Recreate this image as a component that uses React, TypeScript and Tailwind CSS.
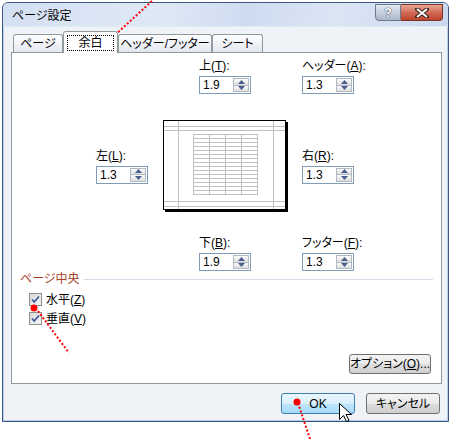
import React from 'react';

// ページ設定 dialog (Vista basic look)

type Lbl = { pre: string; u: string; post: string };

const Spinner = () => (
  <div className="flex flex-col w-[16px] h-[14px] mr-[1px]">
    <div className="flex-1 flex items-center justify-center border border-[#b4bac4] bg-gradient-to-b from-[#fbfbfb] to-[#dedede]">
      <svg width="7" height="4" viewBox="0 0 7 4">
        <path d="M3.5 0 L7 4 L0 4 Z" fill="#4a5e8e" />
      </svg>
    </div>
    <div className="flex-1 flex items-center justify-center border border-t-0 border-[#b4bac4] bg-gradient-to-b from-[#fbfbfb] to-[#dedede]">
      <svg width="7" height="4" viewBox="0 0 7 4">
        <path d="M0 0 L7 0 L3.5 4 Z" fill="#4a5e8e" />
      </svg>
    </div>
  </div>
);

const Field = ({ label, value }: { label: Lbl; value: string }) => (
  <div className="flex flex-col w-[52px]">
    <div className="text-[12px] leading-[14px] whitespace-nowrap">
      {label.pre}
      <u>{label.u}</u>
      {label.post}
    </div>
    <div className="mt-[3px] h-[18px] w-[52px] border border-[#7f9db9] bg-white flex items-center justify-between pl-[3px]">
      <span className="text-[12px] leading-[14px]">{value}</span>
      <Spinner />
    </div>
  </div>
);

const Preview = () => {
  const rows = Array.from({ length: 16 }, (_, i) => 14 + i * 4);
  const cols = [30, 46, 62, 78, 94];
  return (
    <svg width="125" height="92" viewBox="0 0 125 92" className="block">
      <rect x="2" y="2" width="123" height="90" fill="#000" />
      <rect x="0.5" y="0.5" width="122" height="89" fill="#fff" stroke="#000" />
      <g stroke="#c0c0c0" strokeWidth="1">
        {[6, 10, 81, 86].map(y => (
          <line key={'h' + y} x1="1" x2="122" y1={y + 0.5} y2={y + 0.5} />
        ))}
        {[15, 110].map(x => (
          <line key={'v' + x} x1={x + 0.5} x2={x + 0.5} y1="1" y2="89" />
        ))}
        {rows.map(y => (
          <line key={'r' + y} x1="30" x2="95" y1={y + 0.5} y2={y + 0.5} />
        ))}
        {cols.map(x => (
          <line key={'c' + x} x1={x + 0.5} x2={x + 0.5} y1="14" y2="75" />
        ))}
      </g>
    </svg>
  );
};

const Check = ({ label }: { label: Lbl }) => (
  <div className="h-[19px] flex items-center ml-[17px]">
    <svg width="13" height="13" viewBox="0 0 13 13">
      <defs>
        <linearGradient id="cbg" x1="0" y1="0" x2="1" y2="1">
          <stop offset="0" stopColor="#d6d6d6" />
          <stop offset="1" stopColor="#f7f7f7" />
        </linearGradient>
      </defs>
      <rect x="0.5" y="0.5" width="12" height="12" fill="url(#cbg)" stroke="#8e8f8f" />
      <path d="M3 6.5 L5.2 9 L10 3.5" fill="none" stroke="#3d5a9a" strokeWidth="1.8" />
    </svg>
    <span className="ml-[4px] text-[12px] leading-[14px] whitespace-nowrap">
      {label.pre}
      <u>{label.u}</u>
      {label.post}
    </span>
  </div>
);

const Tab = ({ text, w }: { text: string; w: string }) => (
  <div
    className={`${w} h-[18px] border border-b-0 border-[#919b9c] rounded-t-[3px] bg-gradient-to-b from-[#ffffff] to-[#e2e6ef] flex items-center justify-center text-[12px] leading-[14px] whitespace-nowrap`}
  >
    {text}
  </div>
);

export default function App() {
  return (
    <div
      className="relative w-[453px] h-[446px] bg-white overflow-hidden text-black [font-feature-settings:'palt']"
      style={{ fontFamily: '"Liberation Sans", "Noto Sans CJK JP", sans-serif' }}
    >
      {/* window */}
      <div className="ml-[2px] mt-[2px] w-[447px] h-[420px] border border-[#3a5683] rounded-t-[6px] bg-[#eff2f7] flex flex-col shadow-[inset_0_0_0_1px_#b9cde9]">
        {/* title bar */}
        <div className="h-[24px] rounded-t-[5px] flex items-start bg-[linear-gradient(100deg,#d3e0f2_0%,#dfe8f6_35%,#cfdcf0_55%,#dbe5f4_75%,#cad9ef_100%)] border-b border-[#e3eaf5]">
          <div className="ml-[9px] mt-[6px] text-[12px] leading-[14px]">ページ設定</div>
          <div className="ml-auto mr-[5px] mt-[1px] flex">
            <div className="w-[26px] h-[17px] rounded-bl-[4px] border border-[#6c7a90] bg-gradient-to-b from-[#e4eaf2] via-[#c7d1de] to-[#aab7c9] flex items-center justify-center">
              <span className="text-white font-bold text-[13px] leading-[13px] [text-shadow:0_0_1px_#2c3648,0_0_1px_#2c3648]">?</span>
            </div>
            <div className="w-[42px] h-[17px] rounded-br-[4px] border border-l-0 border-[#7d3223] bg-gradient-to-b from-[#e9a796] via-[#d06a55] to-[#c0432c] flex items-center justify-center">
              <svg width="14" height="10" viewBox="0 0 14 10">
                <path d="M2 1 L12 9 M12 1 L2 9" stroke="#3b2520" strokeWidth="4" strokeLinecap="square" />
                <path d="M2 1 L12 9 M12 1 L2 9" stroke="#fff" strokeWidth="2" />
              </svg>
            </div>
          </div>
        </div>

        {/* client area */}
        <div className="flex-1 flex flex-col pt-[4px] pl-[8px] pr-[6px]">
          {/* tabs */}
          <div className="h-[21px] flex items-end ml-[2px] relative z-10">
            <Tab text="ページ" w="w-[50px]" />
            <div className="w-[55px] h-[22px] -mb-[1px] border border-b-0 border-[#919b9c] rounded-t-[3px] bg-white flex items-start justify-center pt-[3px]">
              <div className="w-[47px] h-[16px] border border-dotted border-black flex items-center justify-center text-[12px] leading-[14px]">
                余白
              </div>
            </div>
            <Tab text="ヘッダー/フッター" w="w-[94px]" />
            <Tab text="シート" w="w-[51px]" />
          </div>

          {/* panel */}
          <div className="w-[431px] h-[332px] border border-[#919b9c] bg-white flex flex-col pt-[6px]">
            <div className="flex ml-[187px]">
              <Field label={{ pre: '上(', u: 'T', post: '):' }} value="1.9" />
              <div className="ml-[51px]">
                <Field label={{ pre: 'ヘッダー(', u: 'A', post: '):' }} value="1.3" />
              </div>
            </div>

            <div className="flex items-center ml-[84px] mt-[26px]">
              <Field label={{ pre: '左(', u: 'L', post: '):' }} value="1.3" />
              <div className="ml-[15px]">
                <Preview />
              </div>
              <div className="ml-[14px]">
                <Field label={{ pre: '右(', u: 'R', post: '):' }} value="1.3" />
              </div>
            </div>

            <div className="flex ml-[187px] mt-[24px]">
              <Field label={{ pre: '下(', u: 'B', post: '):' }} value="1.9" />
              <div className="ml-[51px]">
                <Field label={{ pre: 'フッター(', u: 'F', post: '):' }} value="1.3" />
              </div>
            </div>

            {/* group: ページ中央 */}
            <div className="flex items-center ml-[8px] mr-[8px] mt-[1px] h-[14px]">
              <span className="text-[12px] leading-[14px] text-[#a8401f] whitespace-nowrap">ページ中央</span>
              <div className="flex-1 h-px bg-[#d5dbe6] ml-[4px]" />
            </div>
            <div className="mt-[4px] flex flex-col">
              <Check label={{ pre: '水平(', u: 'Z', post: ')' }} />
              <Check label={{ pre: '垂直(', u: 'V', post: ')' }} />
            </div>

            <div className="mt-auto mb-[8px] self-end mr-[10px]">
              <button className="w-[82px] h-[20px] border border-[#707070] rounded-[3px] bg-[linear-gradient(#f3f3f3_0%,#ebebeb_50%,#dddddd_51%,#cfcfcf_100%)] text-[12px] leading-[14px] whitespace-nowrap">
                オプション(<u>O</u>)...
              </button>
            </div>
          </div>

          {/* bottom buttons */}
          <div className="mt-[9px] flex justify-end mr-[2px] gap-[11px]">
            <button className="w-[74px] h-[21px] border border-[#3c7fb1] rounded-[3px] bg-[linear-gradient(#eaf6fd_0%,#d9f0fc_50%,#bee6fd_51%,#a7d9f5_100%)] text-[12px] leading-[14px]">
              OK
            </button>
            <button className="w-[74px] h-[21px] border border-[#707070] rounded-[3px] bg-[linear-gradient(#f3f3f3_0%,#ebebeb_50%,#dddddd_51%,#cfcfcf_100%)] text-[12px] leading-[14px] whitespace-nowrap">
              キャンセル
            </button>
          </div>
        </div>
      </div>

      {/* annotations + cursor overlay */}
      <svg className="absolute inset-0 pointer-events-none" width="453" height="446" viewBox="0 0 453 446">
        <g stroke="#ff0000" strokeWidth="2" strokeDasharray="2 2" fill="none">
          <line x1="152" y1="1" x2="114" y2="36" />
          <line x1="38" y1="311" x2="69" y2="353" />
          <line x1="298" y1="403" x2="310" y2="439" />
        </g>
        <g fill="#ff0000">
          <circle cx="113" cy="37" r="3.5" />
          <circle cx="34" cy="308" r="3.5" />
          <circle cx="297" cy="402" r="3.5" />
        </g>
        <path
          d="M339.5 403.5 L339.5 419.5 L343.5 415.5 L346.5 421.5 L349 420.3 L346 414.5 L351.5 414.5 Z"
          fill="#fff"
          stroke="#000"
          strokeWidth="1"
        />
      </svg>
    </div>
  );
}
